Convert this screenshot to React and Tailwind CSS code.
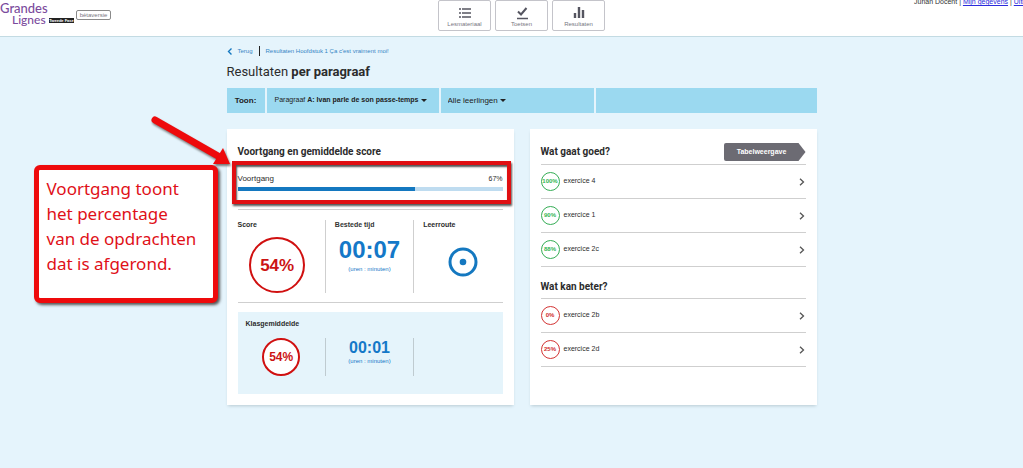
import React from 'react';

const good = [
  { score: '100%', name: 'exercice 4' },
  { score: '90%', name: 'exercice 1' },
  { score: '88%', name: 'exercice 2c' },
];
const improve = [
  { score: '0%', name: 'exercice 2b' },
  { score: '25%', name: 'exercice 2d' },
];

function NavButton({ label, children }) {
  return (
    <button
      type="button"
      className="flex h-[31px] w-[53px] flex-col items-center rounded-[2px] border border-[#c4c4ca] bg-white pt-1 text-[6px] leading-[7px] text-[#77777f]"
    >
      <svg className="h-4 w-4 shrink-0" viewBox="0 0 16 16" fill="none" stroke="#555560" strokeWidth="2" aria-hidden="true">
        {children}
      </svg>
      {label}
    </button>
  );
}

function Header() {
  return (
    <header className="flex h-[37px] items-start justify-between border-b border-[#c3dbe3] bg-white">
      <div className="flex flex-1 items-start">
        <a href="#start" className="block w-[49px] pt-[3px] font-['Lato',sans-serif] leading-[11px] font-medium text-[#7b4b9d]">
          <span className="block text-[13px]">Grandes</span>
          <span className="block pl-3 text-[12px]">Lignes</span>
        </a>
        <span className="mt-[18px] w-[25px] bg-[#222] text-center text-[4px] leading-[5px] font-bold text-white">
          Tweede Fase
        </span>
        <span className="mt-[10px] ml-[2px] w-[35px] rounded-[2px] border border-[#8a8a8a] text-center text-[6px] leading-[8px] text-[#77777f]">
          bètaversie
        </span>
      </div>
      <nav className="flex gap-1 pl-5">
        <NavButton label="Lesmateriaal">
          <path d="M2 4h2M5 4h9M2 8h2M5 8h9M2 12h2M5 12h9" strokeWidth="1.6" />
        </NavButton>
        <NavButton label="Toetsen">
          <path d="M4 6.500l3 3L12.500 3" />
          <path d="M3 13.500h11" strokeWidth="1.500" />
        </NavButton>
        <NavButton label="Resultaten">
          <path d="M4 13V8M8 13V2M12 13V5" strokeWidth="2.400" />
        </NavButton>
      </nav>
      <div className="flex h-3 flex-1 justify-end overflow-hidden text-[7px] whitespace-nowrap text-[#333]">
        <p className="-mt-1 w-[109px] leading-3">
          Jurian Docent |{' '}
          <a href="#gegevens" className="text-[#2b2bdc] underline">Mijn gegevens</a> |{' '}
          <a href="#uitloggen" className="text-[#2b2bdc] underline">Uitloggen</a>
        </p>
      </div>
    </header>
  );
}

function Caret() {
  return (
    <svg className="pointer-events-none -ml-[8px] h-[3px] w-[6px]" viewBox="0 0 6 3" aria-hidden="true">
      <path d="M0 0h6L3 3z" fill="#222" />
    </svg>
  );
}

function FilterBar() {
  return (
    <form className="mt-2 flex h-[25px] items-stretch gap-[2px] text-[7px] text-[#222]">
      <span className="flex w-[38px] items-center justify-center bg-[#9bd9f0] text-[8px] font-bold">Toon:</span>
      <div className="flex w-[172px] items-center bg-[#9bd9f0] pl-2">
        <label htmlFor="paragraaf" className="pr-[2px]">Paragraaf</label>
        <select id="paragraaf" className="appearance-none bg-transparent pr-[10px] font-bold [field-sizing:content]">
          <option>A: Ivan parle de son passe-temps</option>
        </select>
        <Caret />
      </div>
      <div className="flex w-[153px] items-center bg-[#9bd9f0] pl-[7px]">
        <select aria-label="Leerlingen" className="appearance-none bg-transparent pr-[10px] text-[8px] [field-sizing:content]">
          <option>Alle leerlingen</option>
        </select>
        <Caret />
      </div>
      <div className="flex-1 bg-[#9bd9f0]" />
    </form>
  );
}

function Callout() {
  return (
    <>
      <aside className="absolute top-1 -left-[204px] w-[184px] rounded-md border-[5px] border-[#ee0a0c] bg-white px-2 pt-[6px] pb-[22px] font-['Noto_Sans',sans-serif] text-[17px] leading-[25px] whitespace-nowrap text-[#e01018] shadow-[2px_2px_3px_#555]">
        Voortgang toont
        <br />
        het percentage
        <br />
        van de opdrachten
        <br />
        dat is afgerond.
      </aside>
      <svg
        className="absolute -top-[46px] -left-[88px] h-[54px] w-[84px] drop-shadow-[1px_2px_1px_#777]"
        viewBox="0 0 84 54"
        aria-hidden="true"
      >
        <path d="M5 5L68 41" stroke="#ee0a0c" strokeWidth="7" strokeLinecap="round" />
        <path d="M80 49L63 49L73 33z" fill="#ee0a0c" />
      </svg>
      <div className="pointer-events-none absolute top-0 -left-[6px] -right-[8px] h-[43px] border-4 border-[#e00f12] shadow-[1px_2px_2px_#555,inset_1px_2px_2px_#555]" />
    </>
  );
}

function ProgressCard() {
  return (
    <section className="h-[276px] flex-1 bg-white px-[11px] pt-4 shadow-[0_2px_3px_-1px_#b9cbd3]">
      <h2 className="h-4 font-['Roboto',sans-serif] text-[10px] leading-[14px] font-bold">Voortgang en gemiddelde score</h2>
      <div className="relative h-[48px] pt-[13px]">
        <div className="flex justify-between text-[7px] leading-[10px]">
          <label htmlFor="voortgang" className="text-[8px]">Voortgang</label>
          <span>67%</span>
        </div>
        <div id="voortgang" role="progressbar" aria-valuenow="67" className="mt-[3px] h-1 bg-[#bfdcf0]">
          <div className="h-full w-[67%] bg-[#1478c0]" />
        </div>
        <Callout />
      </div>
      <div className="grid h-[94px] grid-cols-3 border-y border-[#cfcfcf] py-[10px] text-[7px] leading-[9px]">
        <div className="border-r border-[#cfcfcf] pr-2">
          <h3 className="font-bold">Score</h3>
          <div className="mx-auto mt-2 flex size-14 items-center justify-center rounded-full border-2 border-[#d01010] text-[17px] font-bold text-[#cc1414]">
            54%
          </div>
        </div>
        <div className="border-r border-[#cfcfcf] text-center text-[#1478c8]">
          <h3 className="pl-[9px] text-left font-bold text-[#333]">Bestede tijd</h3>
          <p className="mt-[9px] text-[24px] leading-6 font-bold">00:07</p>
          <p className="mt-[3px] text-[6px]">(uren : minuten)</p>
        </div>
        <div className="pl-[9px]">
          <h3 className="font-bold">Leerroute</h3>
          <svg className="mx-auto mt-[18px] size-[30px]" viewBox="0 0 30 30" aria-hidden="true">
            <circle cx="15" cy="15" r="13" fill="none" stroke="#1478c0" strokeWidth="3" />
            <circle cx="15" cy="15" r="3.300" fill="#1478c0" />
          </svg>
        </div>
      </div>
      <div className="mt-[9px] h-[82px] bg-[#e5f4fb] pt-[7px] text-[7px] leading-[9px]">
        <h3 className="pl-2 font-bold">Klasgemiddelde</h3>
        <div className="mt-[10px] grid h-[38px] grid-cols-3">
          <div className="flex items-center justify-center border-r border-[#bfcbd0]">
            <div className="flex size-[38px] items-center justify-center rounded-full border-2 border-[#d01010] bg-white text-[12px] font-bold text-[#cc1414]">
              54%
            </div>
          </div>
          <div className="border-r border-[#bfcbd0] text-center text-[#1478c8]">
            <p className="pt-px text-[16px] leading-[18px] font-bold">00:01</p>
            <p className="text-[6px]">(uren : minuten)</p>
          </div>
        </div>
      </div>
    </section>
  );
}

function ExerciseList({ items, tone }) {
  return (
    <ul className="border-t border-[#cfcfcf]">
      {items.map((item) => (
        <li key={item.name} className="h-[34px] border-b border-[#cfcfcf]">
          <a href="#oefening" className="flex h-full items-center gap-1 text-[7px]">
            <span className={`flex size-[19px] items-center justify-center rounded-full border text-[6px] font-bold ${tone}`}>
              {item.score}
            </span>
            <span className="flex-1">{item.name}</span>
            <svg className="mr-px h-2 w-[6px]" viewBox="0 0 6 8" fill="none" aria-hidden="true">
              <path d="M1 .7L4.500 4L1 7.300" stroke="#555" strokeWidth="1.300" />
            </svg>
          </a>
        </li>
      ))}
    </ul>
  );
}

function ResultsCard() {
  return (
    <section className="h-[276px] flex-1 bg-white px-[11px] pt-[14px] shadow-[0_2px_3px_-1px_#b9cbd3]">
      <div className="flex h-[21px] items-start justify-between">
        <h2 className="font-['Roboto',sans-serif] text-[10px] leading-[18px] font-bold">Wat gaat goed?</h2>
        <button
          type="button"
          className="h-[18px] w-[82px] rounded-l-[2px] bg-[#6c6b73] pr-[6px] text-[7px] font-bold text-white [clip-path:polygon(0_0,75px_0,100%_50%,75px_100%,0_100%)]"
        >
          Tabelweergave
        </button>
      </div>
      <ExerciseList items={good} tone="border-[#35ad55] text-[#2fb551]" />
      <h2 className="flex h-[31px] items-center pt-2 font-['Roboto',sans-serif] text-[10px] font-bold">Wat kan beter?</h2>
      <ExerciseList items={improve} tone="border-[#d33434] text-[#cf2a2a]" />
    </section>
  );
}

export default function App() {
  return (
    <div className="min-h-screen overflow-x-hidden bg-[#e5f4fc] font-['Liberation_Sans',Arial,sans-serif] text-[#2c2c2c]">
      <Header />
      <div className="pl-5">
        <main className="mx-auto max-w-[590px] pt-2">
          <nav className="flex h-3 items-center text-[6px] text-[#3585c4]">
            <a href="#terug" className="flex items-center gap-[5px]">
              <svg className="h-[7px] w-[6px]" viewBox="0 0 6 7" fill="none" aria-hidden="true">
                <path d="M4.500 .5L1.500 3.500L4.500 6.500" stroke="#1478c0" strokeWidth="1.400" />
              </svg>
              Terug
            </a>
            <span className="mx-[6px] h-[10px] w-px bg-[#222]" />
            <a href="#hoofdstuk">Resultaten Hoofdstuk 1 Ça c'est vraiment moi!</a>
          </nav>
          <h1 className="mt-[7px] font-['Roboto',sans-serif] text-[13px] leading-4 font-normal">
            Resultaten <b>per paragraaf</b>
          </h1>
          <FilterBar />
          <div className="mt-4 flex gap-4">
            <ProgressCard />
            <ResultsCard />
          </div>
        </main>
      </div>
    </div>
  );
}
